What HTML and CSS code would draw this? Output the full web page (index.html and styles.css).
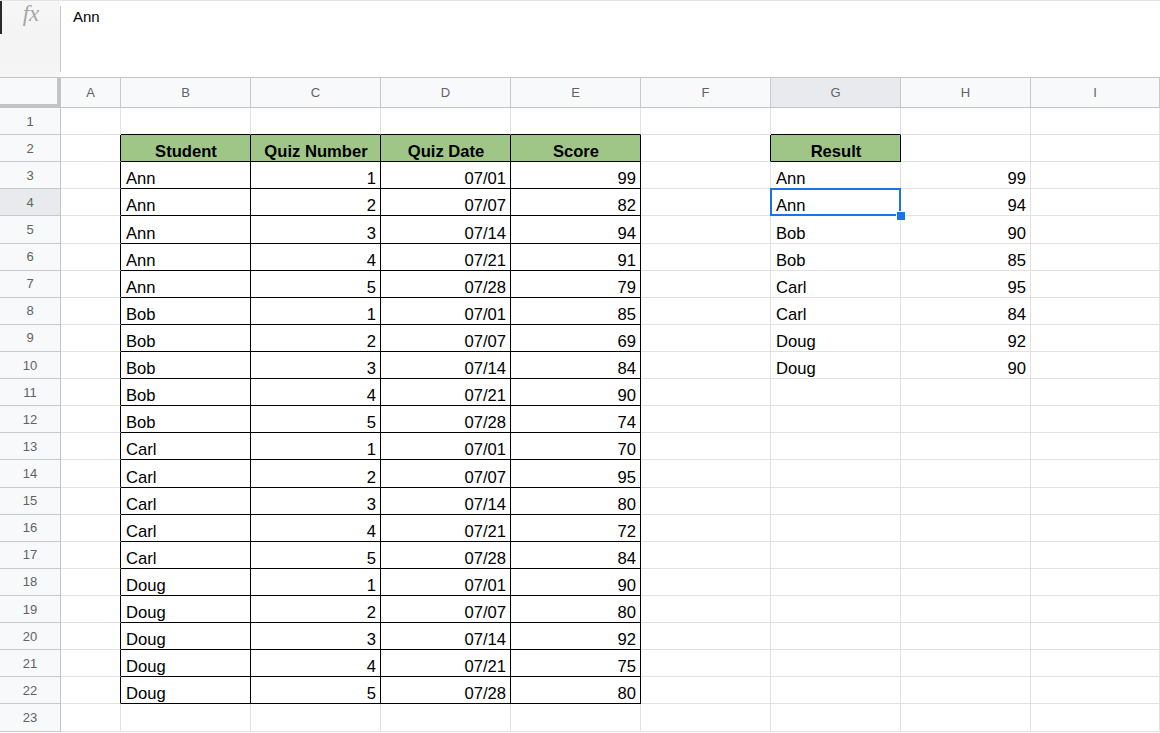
FILE: index.html
```html
<!DOCTYPE html>
<html>
<head>
<meta charset="utf-8">
<link rel="stylesheet" href="styles.css">
</head>
<body>
<div class="fbar">
  <div class="fx"><span class="fxglyph">fx</span></div>
  <div class="sep"></div>
  <div class="ftext">Ann</div>
  <div class="edge"></div>
</div>
<div class="sheet">
  <div class="corner"></div>
  <div class="ch">A</div><div class="ch">B</div><div class="ch">C</div><div class="ch">D</div><div class="ch">E</div><div class="ch">F</div><div class="ch sel">G</div><div class="ch">H</div><div class="ch">I</div>

  <div class="rh">1</div><div class="c"></div><div class="c tt"></div><div class="c tt"></div><div class="c tt"></div><div class="c tt"></div><div class="c"></div><div class="c tt"></div><div class="c"></div><div class="c"></div>

  <div class="rh">2</div><div class="c tl"></div><div class="c t hd">Student</div><div class="c t hd">Quiz Number</div><div class="c t hd">Quiz Date</div><div class="c t hd">Score</div><div class="c tl"></div><div class="c t hd">Result</div><div class="c"></div><div class="c"></div>

  <div class="rh">3</div><div class="c tl"></div><div class="c t">Ann</div><div class="c t r">1</div><div class="c t r">07/01</div><div class="c t r">99</div><div class="c"></div><div class="c">Ann</div><div class="c r">99</div><div class="c"></div>
  <div class="rh sel">4</div><div class="c tl"></div><div class="c t">Ann</div><div class="c t r">2</div><div class="c t r">07/07</div><div class="c t r">82</div><div class="c"></div><div class="c active">Ann<span class="selbox"></span><span class="handle"></span></div><div class="c r">94</div><div class="c"></div>
  <div class="rh">5</div><div class="c tl"></div><div class="c t">Ann</div><div class="c t r">3</div><div class="c t r">07/14</div><div class="c t r">94</div><div class="c"></div><div class="c">Bob</div><div class="c r">90</div><div class="c"></div>
  <div class="rh">6</div><div class="c tl"></div><div class="c t">Ann</div><div class="c t r">4</div><div class="c t r">07/21</div><div class="c t r">91</div><div class="c"></div><div class="c">Bob</div><div class="c r">85</div><div class="c"></div>
  <div class="rh">7</div><div class="c tl"></div><div class="c t">Ann</div><div class="c t r">5</div><div class="c t r">07/28</div><div class="c t r">79</div><div class="c"></div><div class="c">Carl</div><div class="c r">95</div><div class="c"></div>
  <div class="rh">8</div><div class="c tl"></div><div class="c t">Bob</div><div class="c t r">1</div><div class="c t r">07/01</div><div class="c t r">85</div><div class="c"></div><div class="c">Carl</div><div class="c r">84</div><div class="c"></div>
  <div class="rh">9</div><div class="c tl"></div><div class="c t">Bob</div><div class="c t r">2</div><div class="c t r">07/07</div><div class="c t r">69</div><div class="c"></div><div class="c">Doug</div><div class="c r">92</div><div class="c"></div>
  <div class="rh">10</div><div class="c tl"></div><div class="c t">Bob</div><div class="c t r">3</div><div class="c t r">07/14</div><div class="c t r">84</div><div class="c"></div><div class="c">Doug</div><div class="c r">90</div><div class="c"></div>
  <div class="rh">11</div><div class="c tl"></div><div class="c t">Bob</div><div class="c t r">4</div><div class="c t r">07/21</div><div class="c t r">90</div><div class="c"></div><div class="c"></div><div class="c"></div><div class="c"></div>
  <div class="rh">12</div><div class="c tl"></div><div class="c t">Bob</div><div class="c t r">5</div><div class="c t r">07/28</div><div class="c t r">74</div><div class="c"></div><div class="c"></div><div class="c"></div><div class="c"></div>
  <div class="rh">13</div><div class="c tl"></div><div class="c t">Carl</div><div class="c t r">1</div><div class="c t r">07/01</div><div class="c t r">70</div><div class="c"></div><div class="c"></div><div class="c"></div><div class="c"></div>
  <div class="rh">14</div><div class="c tl"></div><div class="c t">Carl</div><div class="c t r">2</div><div class="c t r">07/07</div><div class="c t r">95</div><div class="c"></div><div class="c"></div><div class="c"></div><div class="c"></div>
  <div class="rh">15</div><div class="c tl"></div><div class="c t">Carl</div><div class="c t r">3</div><div class="c t r">07/14</div><div class="c t r">80</div><div class="c"></div><div class="c"></div><div class="c"></div><div class="c"></div>
  <div class="rh">16</div><div class="c tl"></div><div class="c t">Carl</div><div class="c t r">4</div><div class="c t r">07/21</div><div class="c t r">72</div><div class="c"></div><div class="c"></div><div class="c"></div><div class="c"></div>
  <div class="rh">17</div><div class="c tl"></div><div class="c t">Carl</div><div class="c t r">5</div><div class="c t r">07/28</div><div class="c t r">84</div><div class="c"></div><div class="c"></div><div class="c"></div><div class="c"></div>
  <div class="rh">18</div><div class="c tl"></div><div class="c t">Doug</div><div class="c t r">1</div><div class="c t r">07/01</div><div class="c t r">90</div><div class="c"></div><div class="c"></div><div class="c"></div><div class="c"></div>
  <div class="rh">19</div><div class="c tl"></div><div class="c t">Doug</div><div class="c t r">2</div><div class="c t r">07/07</div><div class="c t r">80</div><div class="c"></div><div class="c"></div><div class="c"></div><div class="c"></div>
  <div class="rh">20</div><div class="c tl"></div><div class="c t">Doug</div><div class="c t r">3</div><div class="c t r">07/14</div><div class="c t r">92</div><div class="c"></div><div class="c"></div><div class="c"></div><div class="c"></div>
  <div class="rh">21</div><div class="c tl"></div><div class="c t">Doug</div><div class="c t r">4</div><div class="c t r">07/21</div><div class="c t r">75</div><div class="c"></div><div class="c"></div><div class="c"></div><div class="c"></div>
  <div class="rh">22</div><div class="c tl"></div><div class="c t">Doug</div><div class="c t r">5</div><div class="c t r">07/28</div><div class="c t r">80</div><div class="c"></div><div class="c"></div><div class="c"></div><div class="c"></div>
  <div class="rh">23</div><div class="c"></div><div class="c"></div><div class="c"></div><div class="c"></div><div class="c"></div><div class="c"></div><div class="c"></div><div class="c"></div><div class="c"></div>
</div>
</body>
</html>
```

FILE: styles.css
```css
html, body {
  margin: 0;
  padding: 0;
  background: #ffffff;
  overflow: hidden;
}
body {
  font-family: "Liberation Sans", Arial, sans-serif;
  color: #000000;
  width: 1160px;
  height: 733px;
}
.fbar {
  position: relative;
  border-top: 1px solid #e3e3e3;
  border-bottom: 1px solid #c4c4c4;
  box-sizing: border-box;
  height: 78px;
  display: flex;
  align-items: stretch;
}
.edge {
  position: absolute;
  left: 0;
  top: 0;
  width: 2px;
  height: 33px;
  background: #2a2a2a;
}
.fx {
  width: 60px;
  background: linear-gradient(180deg, #f7f7f7 0%, #f3f3f3 60%, #f6f6f6 100%);
  display: flex;
  justify-content: center;
  align-items: flex-start;
}
.fxglyph {
  font-family: "Liberation Serif", "Times New Roman", serif;
  font-style: italic;
  font-size: 23px;
  color: #a6a6a6;
  line-height: 26px;
  margin-left: 2px;
}
.sep {
  width: 1px;
  background: #c8c8c8;
  margin: 5px 0 5px 0;
}
.ftext {
  padding-left: 12px;
  padding-top: 7px;
  font-size: 15px;
  line-height: 18px;
}
.sheet {
  display: grid;
  grid-template-columns: 61px 60px repeat(7, 130px) 129px;
  grid-template-rows: 30px repeat(23, 27.12px) 10px;
}
.corner {
  background: #f8f9fa;
  border-right: 4px solid #c4c4c4;
  border-bottom: 4px solid #c4c4c4;
  box-sizing: border-box;
}
.ch {
  background: #f8f9fa;
  border-right: 1px solid #c9c9c9;
  border-bottom: 1px solid #c4c4c4;
  box-sizing: border-box;
  display: flex;
  align-items: center;
  justify-content: center;
  font-size: 13px;
  color: #5f6368;
}
.ch.sel, .rh.sel {
  background: #e8eaed;
}
.rh {
  background: #f8f9fa;
  border-right: 1px solid #c4c4c4;
  border-bottom: 1px solid #c9c9c9;
  box-sizing: border-box;
  display: flex;
  align-items: center;
  justify-content: center;
  font-size: 13px;
  color: #5f6368;
}
.c {
  position: relative;
  border-right: 1px solid #e2e2e2;
  border-bottom: 1px solid #e2e2e2;
  box-sizing: border-box;
  display: flex;
  align-items: flex-end;
  padding: 0 4px 0 5px;
  font-size: 16.6px;
  line-height: 19px;
  white-space: nowrap;
}
.c.r {
  justify-content: flex-end;
}
.c.t {
  border-right-color: #000000;
  border-bottom-color: #000000;
}
.c.tl {
  border-right-color: #000000;
}
.c.tt {
  border-bottom-color: #000000;
}
.c.hd {
  background: #9fc587;
  font-weight: bold;
  justify-content: center;
}
.c.active {
  z-index: 2;
}
.selbox {
  position: absolute;
  left: -1px;
  top: -1px;
  right: -1px;
  bottom: -1px;
  border: 2px solid #1a73e8;
  pointer-events: none;
}
.handle {
  position: absolute;
  right: -6px;
  bottom: -6px;
  width: 8px;
  height: 8px;
  background: #1a73e8;
  border: 1px solid #ffffff;
}
```
